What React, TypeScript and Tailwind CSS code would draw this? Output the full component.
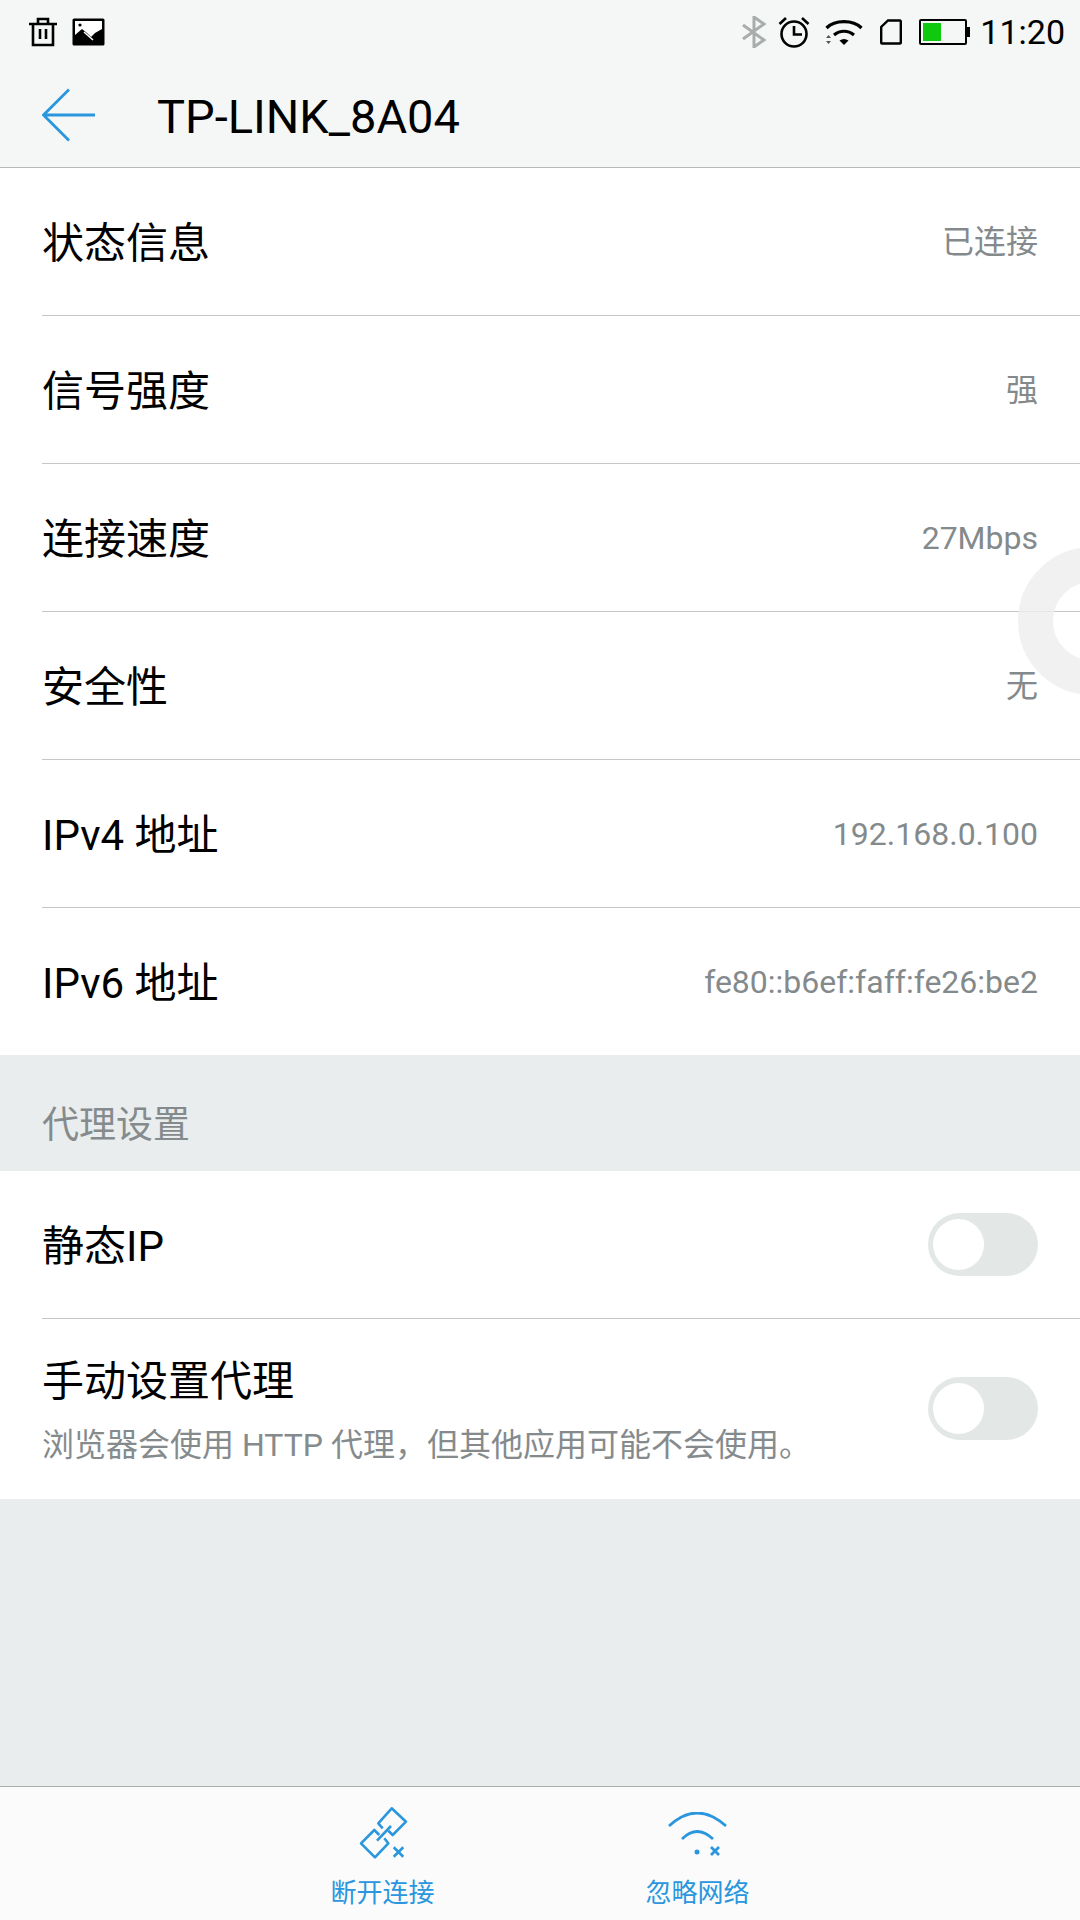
const font = "font-['Roboto','Noto_Sans_CJK_SC',sans-serif]";

const infoRows = [
  { label: "状态信息", value: "已连接" },
  { label: "信号强度", value: "强" },
  { label: "连接速度", value: "27Mbps" },
  { label: "安全性", value: "无" },
  { label: "IPv4 地址", value: "192.168.0.100" },
  { label: "IPv6 地址", value: "fe80::b6ef:faff:fe26:be2" },
];

const Toggle = () => (
  <div className="flex h-[63px] w-[110px] shrink-0 items-center rounded-full bg-[#e3e8e6] pl-[5px]">
    <div className="h-[51px] w-[51px] rounded-full bg-white" />
  </div>
);

const StatusBar = () => (
  <div className="flex h-[60px] items-center justify-between pl-[27px] pr-[15px] pt-[3px]">
    <div className="flex items-center gap-[13px]">
      <svg width="32" height="32" viewBox="0 0 32 32" fill="none" stroke="#000" strokeWidth="2.6">
        <path d="M2 8h28M11 8V3h10v5M6 8v21h20V8M13 13v10M19 13v10" />
      </svg>
      <svg width="33" height="28" viewBox="0 0 33 28">
        <rect x="0.5" y="0.5" width="32" height="27" rx="1.5" fill="#000" />
        <path d="M3 3h27v8l-7 4-4 4-4-4-5-4-7 6z" fill="#fff" />
        <circle cx="8" cy="7" r="1.6" fill="#000" />
        <path d="M12 14l9 8" stroke="#fff" strokeWidth="1.5" />
      </svg>
    </div>
    <div className="flex items-center">
      <svg width="26" height="32" viewBox="0 0 26 32" fill="none" stroke="#a9aeac" strokeWidth="3" className="mr-[11px]">
        <path d="M2 9l21 15-10 7V1l10 7L2 23" />
      </svg>
      <svg width="32" height="32" viewBox="0 0 32 32" fill="none" stroke="#000" strokeWidth="2.6" className="mr-[15px]">
        <circle cx="16" cy="18" r="12.5" />
        <path d="M16 10v8.5h8M1.5 8L8 2M30.5 8L24 2" />
      </svg>
      <svg width="38" height="30" viewBox="0 0 38 30" fill="none" className="mr-[17px]">
        <path d="M1.5 11C10 2.5 28 2.5 36.500 11" stroke="#000" strokeWidth="3.2" />
        <path d="M9 18c6-5 14-5 20 0" stroke="#000" strokeWidth="3.200" />
        <path d="M14.500 23.500c3-2 6-2 9 0L19 28z" fill="#000" />
        <path d="M1 21l2.500-3 2.500 3zM1 24l2.500 3 2.500-3z" fill="#555" />
      </svg>
      <svg width="22" height="26" viewBox="0 0 22 26" fill="none" stroke="#000" strokeWidth="2.400" className="mr-[17px]">
        <path d="M8 1.500h12a.8.8 0 0 1 .8.800v21.400a.8.8 0 0 1-.8.800H2a.8.8 0 0 1-.8-.800V8z" />
      </svg>
      <div className="mr-[10px] flex items-center">
        <div className="flex h-[26px] w-[48px] items-stretch border-[2.500px] border-black p-[2px] rounded-[2px]">
          <div className="w-[18px] bg-[#0fc90f]" />
        </div>
        <div className="h-[10px] w-[3px] bg-black" />
      </div>
      <span className="text-[34px] leading-none text-black">11:20</span>
    </div>
  </div>
);

const Row = ({ label, value, last }: { label: string; value: string; last?: boolean }) => (
  <div className="pl-[42px]">
    <div className={`flex items-center justify-between pr-[42px] ${last ? "h-[147px]" : "h-[148px] border-b border-[#c4c8c8]"}`}>
      <span className="block pt-[3px] text-[42px] text-black">{label}</span>
      <span className="text-[32px] text-[#848a8c]">{value}</span>
    </div>
  </div>
);

export default function App() {
  return (
    <div className={`${font} relative flex h-[1920px] w-[1080px] flex-col overflow-hidden bg-[#e9edee]`}>
      <div className="h-[168px] shrink-0 border-b border-[#b4b9b9] bg-[#f4f7f5]">
        <StatusBar />
        <div className="flex h-[107px] items-center pl-[42px] pt-[3px]">
          <svg width="54" height="54" viewBox="0 0 54 54" fill="none" stroke="#2a96de" strokeWidth="2.800">
            <path d="M53 27H1M27 1.500L1.500 27 27 52.500" />
          </svg>
          <span className="ml-[61px] block pt-[5px] text-[47px] text-black">TP-LINK_8A04</span>
        </div>
      </div>

      <div className="bg-white">
        {infoRows.map((r, i) => (
          <Row key={r.label} label={r.label} value={r.value} last={i === infoRows.length - 1} />
        ))}
      </div>

      <div className="flex h-[116px] items-center pl-[42px] pt-[26px] text-[37px] text-[#858b8d]">代理设置</div>

      <div className="bg-white pl-[42px]">
        <div className="flex h-[148px] items-center justify-between border-b border-[#c4c8c8] pr-[42px]">
          <span className="block pt-[3px] text-[42px] text-black">静态IP</span>
          <Toggle />
        </div>
        <div className="flex h-[180px] items-center justify-between pr-[42px]">
          <div className="flex flex-col pt-[5px]">
            <span className="text-[42px] leading-[56px] text-black">手动设置代理</span>
            <span className="mt-[11px] text-[32px] leading-[48px] text-[#858b8d]">浏览器会使用 HTTP 代理，但其他应用可能不会使用。</span>
          </div>
          <div className="pb-[2px]">
            <Toggle />
          </div>
        </div>
      </div>

      <div className="flex-1" />

      <div className="flex h-[134px] shrink-0 justify-center gap-[211px] border-t border-[#a9adad] bg-[#fbfbfb] text-[#2a96de]">
        <div className="flex w-[104px] flex-col items-center pt-[13px]">
          <svg width="70" height="70" viewBox="-3 0 70 70" fill="none" stroke="#2a96de" strokeWidth="2.600" strokeLinejoin="round">
            <path d="M31.700 28.300L27.300 23.300 40.700 8.300 55 21.700 41.700 35 37.300 30.700" />
            <path d="M28.300 35L23.300 30 10 43.300 24 57.300 37.300 43.300 33.300 38.300" />
            <path d="M26 40.700L40 26" />
            <path d="M42.700 47.300l9.600 9.400M52.300 47.300l-9.600 9.400" />
          </svg>
          <span className="mt-[3px] text-[26px] leading-[40px]">断开连接</span>
        </div>
        <div className="flex w-[104px] flex-col items-center pt-[25px]">
          <svg width="60" height="46" viewBox="0 0 60 46" fill="none" stroke="#2a96de" strokeWidth="2.800">
            <path d="M1 14Q29 -12 58 14" />
            <path d="M14 27Q29 12 45 27" />
            <circle cx="29" cy="40" r="2.500" fill="#2a96de" stroke="none" />
            <path d="M43 35l8 8M51 35l-8 8" />
          </svg>
          <span className="mt-[15px] text-[26px] leading-[40px]">忽略网络</span>
        </div>
      </div>

      {/* floating assistive ball, clipped by the right edge */}
      <div className="absolute left-[1018px] top-[547px] h-[148px] w-[148px] rounded-full border-[35px] border-[#eeeeee]/80" />
    </div>
  );
}
